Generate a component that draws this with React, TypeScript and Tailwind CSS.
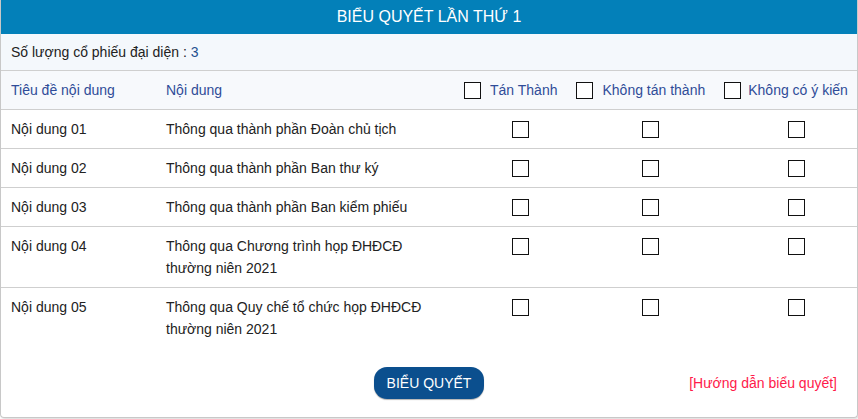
import React from 'react';

const rows = [
  { title: 'Nội dung 01', content: ['Thông qua thành phần Đoàn chủ tịch'] },
  { title: 'Nội dung 02', content: ['Thông qua thành phần Ban thư ký'] },
  { title: 'Nội dung 03', content: ['Thông qua thành phần Ban kiểm phiếu'] },
  { title: 'Nội dung 04', content: ['Thông qua Chương trình họp ĐHĐCĐ', 'thường niên 2021'] },
  { title: 'Nội dung 05', content: ['Thông qua Quy chế tổ chức họp ĐHĐCĐ', 'thường niên 2021'] },
];

const Box = ({ className = '' }: { className?: string }) => (
  <span className={`block w-[17px] h-[17px] border-[1.5px] border-[#111] bg-white shrink-0 ${className}`} />
);

export default function App() {
  return (
    <div className="w-[858px] h-[419px] bg-white font-['Liberation_Sans',Arial,sans-serif] text-[14px] text-[#222]">
      <div className="w-[858px] h-[418px] border-x border-b border-[#c8c8c8] rounded-b-[4px] shadow-[1px_1px_2px_rgba(0,0,0,0.15)] overflow-hidden flex flex-col">
        <div className="h-[34px] bg-[#0380b9] text-white text-[16px] flex items-center justify-center">
          BIỂU QUYẾT LẦN THỨ 1
        </div>
        <div className="h-[37px] bg-[#f4f8fc] border-b border-[#cfcfcf] flex items-center pl-[10px]">
          Số lượng cổ phiếu đại diện : <span className="ml-1 text-[#24508f]">3</span>
        </div>
        <div className="h-[39px] bg-[#f7f9fc] border-b border-[#cfcfcf] flex items-center text-[#2f4c98]">
          <div className="w-[165px] pl-[10px]">Tiêu đề nội dung</div>
          <div className="w-[290px]">Nội dung</div>
          <div className="flex items-center pl-[8px] gap-[19px]">
            <label className="flex items-center gap-[9px]">
              <Box />
              Tán Thành
            </label>
            <label className="flex items-center gap-[9px]">
              <Box />
              Không tán thành
            </label>
            <label className="flex items-center gap-[7px]">
              <Box />
              Không có ý kiến
            </label>
          </div>
        </div>
        {rows.map((r, i) => (
          <div
            key={r.title}
            className={`flex py-[8px] leading-[22px] ${i < rows.length - 1 ? 'border-b border-[#cfcfcf]' : ''}`}
          >
            <div className="w-[165px] pl-[10px]">{r.title}</div>
            <div className="w-[290px]">
              {r.content.map((c) => (
                <div key={c}>{c}</div>
              ))}
            </div>
            <div className="w-[130px] pl-[56px] pt-[3px]">
              <Box />
            </div>
            <div className="w-[130px] pl-[56px] pt-[3px]">
              <Box />
            </div>
            <div className="flex-1 pl-[72px] pt-[3px]">
              <Box />
            </div>
          </div>
        ))}
        <div className="relative flex items-center justify-center mt-[19px] h-[32px]">
          <button className="w-[110px] h-[32px] rounded-[13px] bg-[#0b4f8e] text-white text-[14px] shadow-[0_1px_1px_rgba(0,0,0,0.3)]">
            BIỂU QUYẾT
          </button>
          <a className="absolute right-[20px] text-[#ff1a4a]">[Hướng dẫn biểu quyết]</a>
        </div>
      </div>
    </div>
  );
}
